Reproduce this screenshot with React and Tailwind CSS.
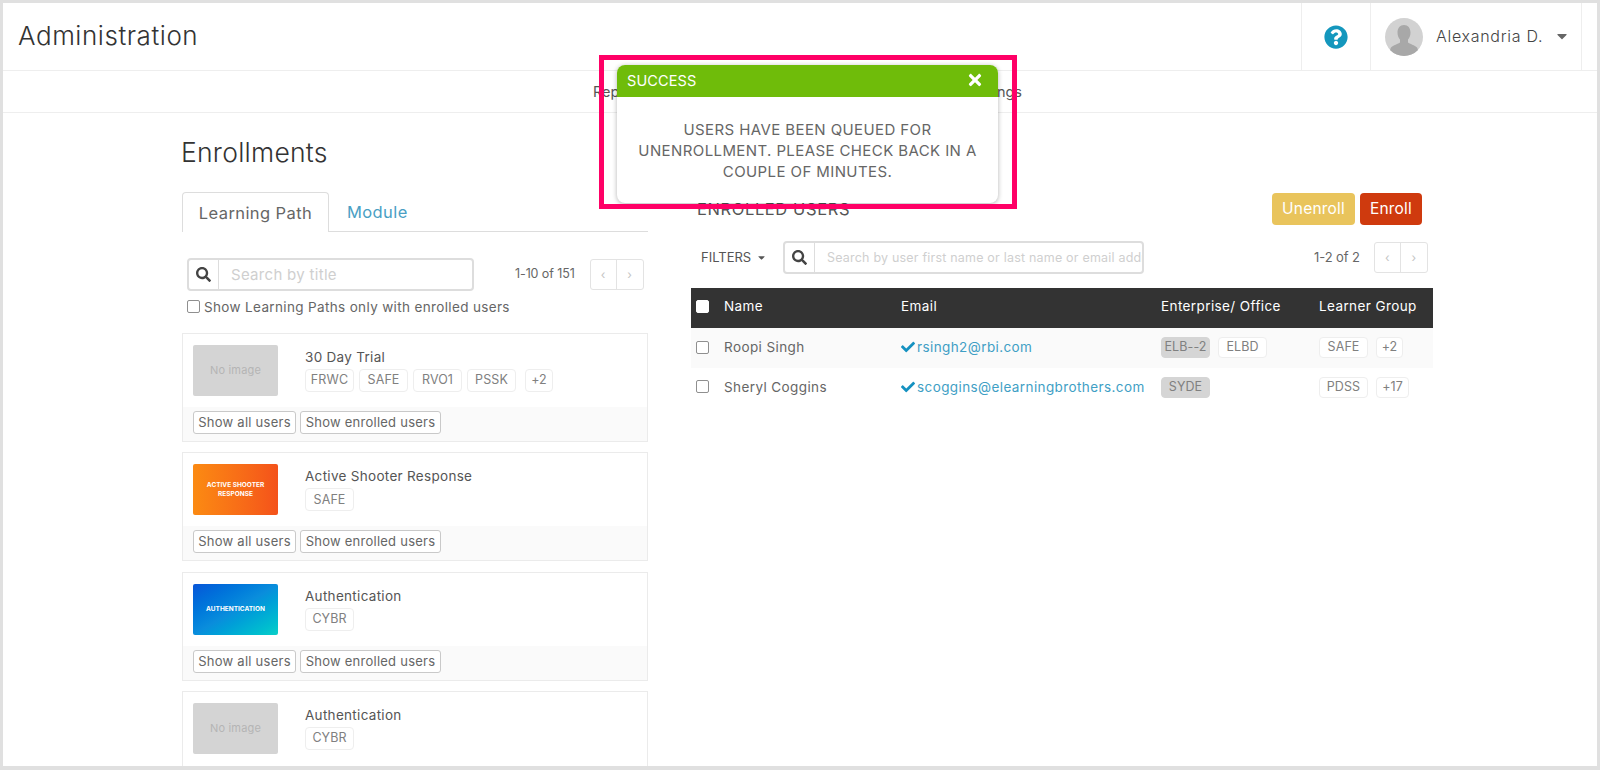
import React from "react";
import { FaSearch, FaQuestionCircle, FaTimes, FaCheck, FaCaretDown } from "react-icons/fa";

const Check = ({ dark }) => (
  <input
    type="checkbox"
    className={`appearance-none block w-[13px] h-[13px] rounded-[2px] border ${dark ? "bg-white border-white" : "bg-white border-[#8f8f8f]"}`}
  />
);

const Tag = ({ children, grey, w = "w-[49px]", h = "h-[21px]" }) => (
  <span
    className={`inline-flex items-center justify-center ${h} rounded-[4px] border text-[12.5px] tracking-[0.1px] text-[#808080] ${w} ${grey ? "bg-[#d5d5d5] border-[#d5d5d5]" : "bg-white border-[#eeeeee]"}`}
  >
    {children}
  </span>
);

const Pager = ({ w = "w-[26px]" }) => (
  <div className="flex h-[31px] border border-[#e3e3e3] rounded-[3px] text-[12px] text-[#c4c4c4]">
    <span className={`${w} flex items-center justify-center border-r border-[#e3e3e3]`}>‹</span>
    <span className={`${w} flex items-center justify-center`}>›</span>
  </div>
);

const Search = ({ placeholder, cls, textCls }) => (
  <div className={`flex h-[33px] border-2 border-[#dddddd] rounded-[4px] overflow-hidden ${cls}`}>
    <span className="w-[30px] shrink-0 flex items-center justify-center border-r border-[#dddddd] text-[#444]">
      <FaSearch className="w-[15px] h-[15px]" />
    </span>
    <span className={`pl-[12px] pt-[2px] flex items-center whitespace-nowrap overflow-hidden text-[#cfcfcf] ${textCls}`}>{placeholder}</span>
  </div>
);

const Thumb = ({ type, label }) => {
  if (type === "none")
    return (
      <div className="w-[85px] h-[51px] shrink-0 rounded-[2px] bg-[#d4d4d4] flex items-center justify-center text-[11px] tracking-[0.2px] text-[#b4b4b4]">
        No image
      </div>
    );
  const bg = type === "orange" ? "bg-gradient-to-r from-[#fb8a12] to-[#f4521a]" : "bg-gradient-to-br from-[#0a55d8] via-[#0a8ddc] to-[#0ccfc8]";
  return (
    <div className={`w-[85px] h-[51px] shrink-0 rounded-[2px] ${bg} flex items-center justify-center text-center text-[6.500px] leading-[9px] font-bold text-white px-[8px]`}>
      {label}
    </div>
  );
};

const OutlineBtn = ({ children, cls }) => (
  <span className={`flex items-center justify-center h-[23px] bg-white border border-[#c9c9c9] rounded-[3px] text-[13px] tracking-[0.25px] text-[#666] ${cls}`}>
    {children}
  </span>
);

const Card = ({ type, label, title, tags, more, noFooter }) => (
  <div className="h-[109px] mb-[10.4px] border border-[#ebebeb] flex flex-col overflow-hidden shrink-0">
    <div className="h-[73px] shrink-0 flex pl-[10px] pt-[11px]">
      <Thumb type={type} label={label} />
      <div className="ml-[27px]">
        <div className="text-[13.5px] leading-[20px] tracking-[0.3px] text-[#555] mt-[2px]">{title}</div>
        <div className="flex gap-[5px] mt-[2px]">
          {tags.map((t) => (
            <Tag key={t} h="h-[23px]">{t}</Tag>
          ))}
          {more && <Tag h="h-[23px]" w="w-[28px] ml-[4px]">{more}</Tag>}
        </div>
      </div>
    </div>
    {!noFooter && (
      <div className="flex-1 bg-[#fafafa] flex gap-[4px] pl-[10px] pt-[4px]">
        <OutlineBtn cls="w-[103px]">Show all users</OutlineBtn>
        <OutlineBtn cls="w-[141px]">Show enrolled users</OutlineBtn>
      </div>
    )}
  </div>
);

const Row = ({ name, email, ent, groups, shade }) => (
  <tr className={`h-[39.5px] ${shade ? "bg-[#fafafa]" : "bg-white"}`}>
    <td className="pl-[5px] pb-[1px]">
      <Check />
    </td>
    <td className="pl-[10px] pb-[1px] text-[#666]">{name}</td>
    <td className="pl-[10px] pb-[1px]">
      <span className="flex items-center text-[#3f9fc5] whitespace-nowrap">
        <FaCheck className="w-[14px] h-[14px] text-[#1591c0] mr-[2px]" />
        {email}
      </span>
    </td>
    <td className="pl-[10px]">
      <div className="flex gap-[8px]">
        {ent.map((e, i) => (
          <Tag key={e} grey={i === 0}>
            {e}
          </Tag>
        ))}
      </div>
    </td>
    <td className="pl-[10px]">
      <div className="flex gap-[8px]">
        <Tag>{groups[0]}</Tag>
        <Tag w={groups[1].length > 2 ? "w-[33px]" : "w-[27px]"}>{groups[1]}</Tag>
      </div>
    </td>
  </tr>
);

export default function App() {
  return (
    <div className="relative h-[770px] overflow-hidden border-x-[3px] border-t-[3px] border-b-[4px] border-[#e0e0e0] bg-white font-['Inter','Liberation_Sans',sans-serif] text-[#555]">
      <header className="h-[68px] flex border-b border-[#eeeeee]">
        <h1 className="flex-1 pl-[15px] pt-[18px] text-[26px] leading-[30px] tracking-[0.55px] font-light text-[#333]">Administration</h1>
        <div className="w-[69px] border-l border-[#eeeeee] flex items-center justify-center text-[#1497bd]">
          <FaQuestionCircle className="w-[24px] h-[24px]" />
        </div>
        <div className="w-[212px] border-l border-r border-[#eeeeee] flex items-center pl-[14px] mr-[15px]">
          <svg viewBox="0 0 38 38" className="w-[38px] h-[38px] shrink-0 rounded-full" aria-hidden="true">
            <rect width="38" height="38" fill="#d2d2d2" />
            <path d="M19 7c-4 0-6.500 3-6.500 7.500 0 3 1 5.500 2.500 7v3c-1.500 1.500-7 2.500-9 5-1 1.300-1.500 5-1.500 8.500h29c0-3.500-.5-7.200-1.500-8.500-2-2.500-7.500-3.500-9-5v-3c1.500-1.500 2.500-4 2.500-7C25.500 10 23 7 19 7z" fill="#a8a8a8" />
          </svg>
          <span className="ml-[13px] -mt-[2px] text-[16px] tracking-[0.7px] font-light text-[#444] whitespace-nowrap">Alexandria D.</span>
          <FaCaretDown className="ml-[11px] -mt-[2px] w-[16px] h-[16px] text-[#666]" />
        </div>
      </header>

      <nav className="h-[42px] border-b border-[#eeeeee] pl-[590px] flex items-center">
        <div className="w-[429px] flex justify-between text-[14.5px] text-[#555]">
          <span>Reports</span>
          <span>Settings</span>
        </div>
      </nav>

      <main className="flex pl-[179px]">
        <section className="w-[466px] shrink-0 flex flex-col">
          <h2 className="mt-[24px] -ml-[1px] text-[26.5px] leading-[30px] tracking-[0.25px] font-light text-[#333]">Enrollments</h2>
          <div className="mt-[25px] h-[40px] flex border-b border-[#dddddd]">
            <span className="w-[147px] h-[40px] pt-[2px] bg-white border border-b-0 border-[#dddddd] rounded-t-[4px] flex items-center justify-center text-[16.5px] tracking-[0.4px] text-[#666]">
              Learning Path
            </span>
            <span className="ml-[18px] pt-[2px] flex items-center text-[16.5px] tracking-[0.4px] text-[#4a9fc4]">Module</span>
          </div>
          <div className="mt-[26px] flex items-center pl-[5px]">
            <Search placeholder="Search by title" cls="w-[287px]" textCls="text-[15px] tracking-[0.3px]" />
            <span className="ml-[41px] text-[12.5px] tracking-[-0.1px] text-[#666] whitespace-nowrap">1-10 of 151</span>
            <span className="ml-[15px]">
              <Pager />
            </span>
          </div>
          <label className="mt-[2px] h-[26px] flex items-center pl-[5px]">
            <Check />
            <span className="ml-[4px] mt-[3px] text-[13.5px] tracking-[0.35px] text-[#666] whitespace-nowrap">Show Learning Paths only with enrolled users</span>
          </label>
          <div className="mt-[14px] flex flex-col h-[500px]">
            <Card type="none" title="30 Day Trial" tags={["FRWC", "SAFE", "RVO1", "PSSK"]} more="+2" />
            <Card type="orange" label="ACTIVE SHOOTER RESPONSE" title="Active Shooter Response" tags={["SAFE"]} />
            <Card type="blue" label="AUTHENTICATION" title="Authentication" tags={["CYBR"]} />
            <Card type="none" title="Authentication" tags={["CYBR"]} noFooter />
          </div>
        </section>

        <section className="ml-[43px] w-[742px] shrink-0 flex flex-col">
          <div className="mt-[80px] h-[32px] flex items-center">
            <h3 className="ml-[6px] text-[16.5px] tracking-[0.6px] text-[#555]">ENROLLED USERS</h3>
            <div className="ml-auto mr-[11px] flex gap-[5px]">
              <span className="w-[83px] h-[32px] rounded-[4px] bg-[#e9c45c] text-white text-[15.5px] tracking-[0.2px] flex items-center justify-center">Unenroll</span>
              <span className="w-[62px] h-[32px] rounded-[4px] bg-[#cf3a0e] text-white text-[15.5px] tracking-[0.2px] flex items-center justify-center">Enroll</span>
            </div>
          </div>
          <div className="mt-[16px] flex items-center">
            <span className="ml-[10px] flex items-center w-[82px] text-[13px] text-[#555]">
              FILTERS
              <FaCaretDown className="ml-[5px] w-[11px] h-[11px]" />
            </span>
            <Search placeholder="Search by user first name or last name or email address" cls="w-[361px]" textCls="text-[12.5px] tracking-[0.2px]" />
            <span className="ml-[170px] text-[13px] tracking-[-0.1px] text-[#666] whitespace-nowrap">1-2 of 2</span>
            <span className="ml-[14px]">
              <Pager />
            </span>
          </div>
          <table className="mt-[14px] w-[742px] table-fixed border-collapse text-[13.5px] tracking-[0.4px]">
            <colgroup>
              <col className="w-[23px]" />
              <col className="w-[177px]" />
              <col className="w-[260px]" />
              <col className="w-[158px]" />
              <col className="w-[124px]" />
            </colgroup>
            <thead>
              <tr className="h-[40px] bg-[#333333] text-white text-left">
                <th className="pl-[5px] pb-[3px] font-normal">
                  <Check dark />
                </th>
                <th className="pl-[10px] pb-[3px] font-normal">Name</th>
                <th className="pl-[10px] pb-[3px] font-normal">Email</th>
                <th className="pl-[10px] pb-[3px] font-normal whitespace-nowrap">Enterprise/ Office</th>
                <th className="pl-[10px] pb-[3px] font-normal whitespace-nowrap">Learner Group</th>
              </tr>
            </thead>
            <tbody>
              <Row shade name="Roopi Singh" email="rsingh2@rbi.com" ent={["ELB--2", "ELBD"]} groups={["SAFE", "+2"]} />
              <Row name="Sheryl Coggins" email="scoggins@elearningbrothers.com" ent={["SYDE"]} groups={["PDSS", "+17"]} />
            </tbody>
          </table>
        </section>
      </main>

      <div className="absolute left-[614px] top-[62px] w-[381px] h-[138px] bg-white rounded-[8px] shadow-[0_1px_5px_rgba(0,0,0,0.3)] overflow-hidden z-10">
        <div className="h-[32px] bg-[#6fbc0a] flex items-center justify-between pl-[10px] pr-[14px] text-white text-[14.5px] tracking-[0.1px]">
          <span>SUCCESS</span>
          <FaTimes className="w-[18px] h-[18px] -mt-[2px]" />
        </div>
        <p className="mt-[22px] px-[20px] text-center text-[15px] leading-[21px] tracking-[0.4px] text-[#666]">
          USERS HAVE BEEN QUEUED FOR UNENROLLMENT. PLEASE CHECK BACK IN A COUPLE OF MINUTES.
        </p>
      </div>
      <div className="absolute left-[596px] top-[52px] w-[418px] h-[154px] border-[5px] border-[#ff0066] z-20 pointer-events-none" />
    </div>
  );
}
